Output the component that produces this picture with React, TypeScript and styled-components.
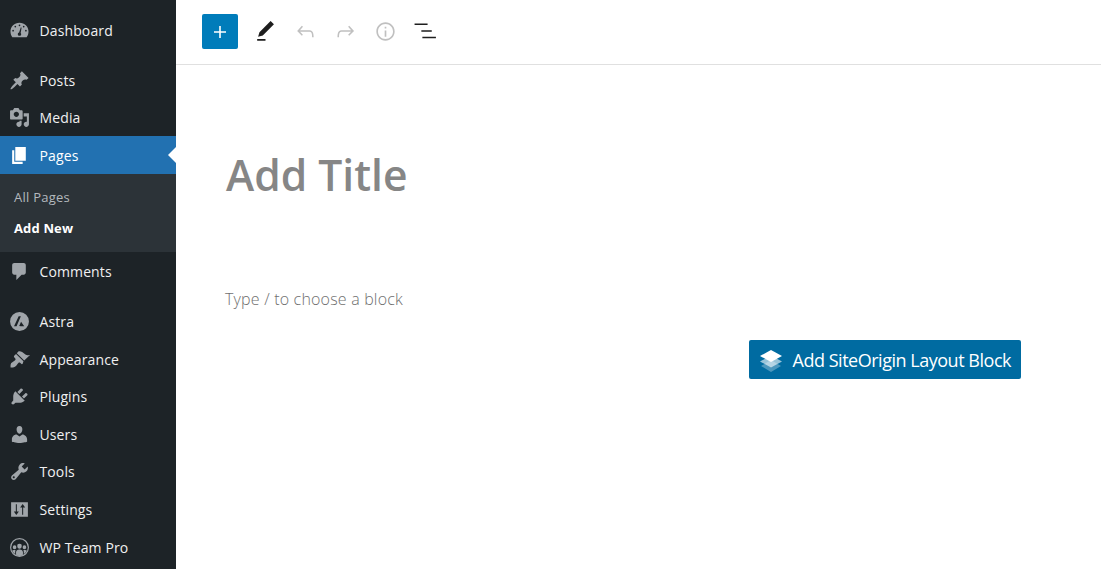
import React from 'react';
import styled, { createGlobalStyle } from 'styled-components';

const GlobalStyle = createGlobalStyle`
  html, body {
    margin: 0;
    height: 100%;
    background: #fff;
    overflow: hidden;
    font-family: "Open Sans", "Noto Sans", "Liberation Sans", sans-serif;
  }
`;

const Layout = styled.div`
  display: flex;
  width: 1101px;
  height: 569px;
  overflow: hidden;
`;

const Sidebar = styled.nav`
  flex: 0 0 176px;
  background: #1d2327;
  padding-top: 11.25px;
`;

const MenuRow = styled.div<{ $active?: boolean; $gap?: number }>`
  position: relative;
  display: flex;
  align-items: center;
  height: 37.6px;
  margin-bottom: ${(p) => p.$gap ?? 0}px;
  padding-left: 9px;
  background: ${(p) => (p.$active ? '#2271b1' : 'transparent')};
  color: ${(p) => (p.$active ? '#fff' : '#f0f0f1')};
  font-size: 14px;
  letter-spacing: 0.12px;
`;

const MenuIcon = styled.svg<{ $active?: boolean }>`
  flex: 0 0 21px;
  width: 21px;
  height: 21px;
  margin-right: 9.5px;
  fill: ${(p) => (p.$active ? '#fff' : '#a0a5aa')};
`;

const ActiveArrow = styled.span`
  position: absolute;
  right: 0;
  top: 50%;
  margin-top: -8px;
  border: 8px solid transparent;
  border-left-width: 0;
  border-right-color: #fff;
`;

const SubMenu = styled.div`
  display: flex;
  flex-direction: column;
  justify-content: center;
  gap: 11px;
  box-sizing: border-box;
  height: 78.2px;
  padding: 0 0 2px 14px;
  background: #2c3338;
`;

const SubItem = styled.div<{ $current?: boolean }>`
  font-size: 13px;
  line-height: 20px;
  letter-spacing: ${(p) => (p.$current ? '0.15px' : '0.25px')};
  font-weight: ${(p) => (p.$current ? 700 : 400)};
  color: ${(p) => (p.$current ? '#fff' : '#b4b9be')};
`;

const Main = styled.main`
  flex: 1;
  min-width: 0;
  display: flex;
  flex-direction: column;
`;

const Toolbar = styled.header`
  display: flex;
  align-items: center;
  gap: 1px;
  box-sizing: border-box;
  height: 65px;
  padding: 0 0 1px 26px;
  border-bottom: 1px solid #e0e0e0;
`;

const InserterButton = styled.button`
  display: flex;
  align-items: center;
  justify-content: center;
  width: 36px;
  height: 35px;
  margin-right: 7px;
  padding: 0;
  border: 0;
  border-radius: 2px;
  background: #007cba;
  svg {
    width: 24px;
    height: 24px;
    fill: #fff;
  }
`;

const ToolButton = styled.button<{ $muted?: boolean }>`
  display: flex;
  align-items: center;
  justify-content: center;
  width: 39px;
  height: 36px;
  padding: 0;
  border: 0;
  background: none;
  svg {
    width: 25px;
    height: 25px;
    fill: ${(p) => (p.$muted ? '#c0c0c0' : '#1e1e1e')};
  }
`;

const Canvas = styled.div`
  display: flex;
  flex-direction: column;
  padding: 0 80px 0 50px;
`;

const Title = styled.h1`
  margin: 80px 0 0;
  font-size: 42.6px;
  line-height: 58px;
  font-weight: 600;
  color: #868686;
`;

const Placeholder = styled.p`
  margin: 84px 0 0 -1px;
  font-size: 16px;
  line-height: 24px;
  font-weight: 300;
  letter-spacing: 0.19px;
  color: #6f6f6f;
`;

const LayoutButton = styled.button`
  align-self: flex-end;
  display: flex;
  align-items: center;
  gap: 10px;
  box-sizing: border-box;
  height: 39px;
  margin-top: 29px;
  padding: 0 10px;
  border: 0;
  border-radius: 2px;
  background: #006ba1;
  color: #fff;
  font: inherit;
  font-size: 18px;
  letter-spacing: -0.48px;
  svg {
    width: 24px;
    height: 24px;
  }
`;

const icons: Record<string, React.ReactNode> = {
  dashboard: (
    <path
      fillRule="evenodd"
      d="M3.200 16.500h13.600C17.900 15 18.600 13.100 18.600 11 18.600 6.300 14.800 2.600 10 2.600S1.400 6.300 1.400 11c0 2.100.7 4 1.800 5.500zM10 4.300a.8.8 0 1 1 0 1.600.8.8 0 0 1 0-1.600zM6 5.500a.8.8 0 1 1 0 1.600.8.8 0 0 1 0-1.600zm8 0a.8.8 0 1 1 0 1.600.8.8 0 0 1 0-1.600zM3.900 9.400a.8.8 0 1 1 0 1.600.8.8 0 0 1 0-1.600zm12.200 0a.8.8 0 1 1 0 1.600.8.8 0 0 1 0-1.600zM11.300 7l.7.300-.9 5c.3.300.5.700.5 1.200 0 .9-.7 1.500-1.600 1.500s-1.600-.6-1.600-1.500c0-.8.5-1.400 1.200-1.500z"
    />
  ),
  post: (
    <path d="M10.440 3.020l1.820-1.820 6.360 6.350-1.830 1.820c-1.050-.68-2.480-.57-3.410.36l-.75.75c-.92.930-1.040 2.350-.35 3.410l-1.830 1.820-2.410-2.410-2.800 2.790c-.42.420-3.380 2.710-3.800 2.290s1.860-3.390 2.280-3.810l2.790-2.790L4.100 9.360l1.830-1.820c1.050.690 2.480.570 3.400-.36l.75-.75c.930-.920 1.050-2.350.360-3.410z" />
  ),
  media: (
    <path d="M13 11V4c0-.55-.45-1-1-1h-1.670L9 1H5L3.670 3H2c-.55 0-1 .45-1 1v7c0 .55.45 1 1 1h10c.55 0 1-.45 1-1zM7 4.500c1.380 0 2.500 1.120 2.500 2.500S8.380 9.500 7 9.500 4.500 8.380 4.500 7 5.620 4.500 7 4.500zM14 6h5v10.500c0 1.380-1.120 2.500-2.500 2.500S14 17.880 14 16.500s1.120-2.500 2.500-2.500c.17 0 .34.020.5.050V9h-3V6zm-4 8.050V13h2v3.500c0 1.380-1.120 2.500-2.500 2.500S7 17.880 7 16.500 8.120 14 9.500 14c.17 0 .34.020.5.050z" />
  ),
  page: <path d="M6 15V2h10v13H6zm-1 1h8v2H3V5h2v11z" />,
  comments: (
    <path d="M5 2h9c1.100 0 2 .9 2 2v7c0 1.100-.9 2-2 2h-2l-5 5v-5H5c-1.100 0-2-.9-2-2V4c0-1.100.9-2 2-2z" />
  ),
  astra: (
    <path
      fillRule="evenodd"
      d="M10 1a9 9 0 1 1 0 18 9 9 0 0 1 0-18zM9.200 5L4.800 14.600h2.400l4.100-9.600zm2.300 5.200l-1.800 4 1.600.4h3.200z"
    />
  ),
  appearance: (
    <path d="M14.480 11.060L7.410 3.990l1.500-1.500c.5-.56 2.300-.47 3.510.32 1.210.8 1.430 1.280 2.910 2.100 1.180.64 2.450 1.260 4.670.85zm-.71.71L6.700 4.700 4.930 6.470c-.39.39-.39 1.020 0 1.410l1.060 1.060c.39.39.39 1.030 0 1.420-.6.6-1.430 1.110-2.210 1.690-.35.26-.7.53-1.010.84C1.430 13.710 1.400 15.600 1.500 17.500c.3.300 3.300.6 5.100-1.200.31-.31.58-.66.840-1.010.58-.78 1.090-1.610 1.690-2.210.39-.39 1.030-.39 1.420 0l1.060 1.060c.39.390 1.020.390 1.410 0z" />
  ),
  plugins: (
    <path d="M13.110 4.360L9.870 7.600 8 5.730l3.240-3.240c.35-.34 1.050-.2 1.560.32.52.51.66 1.210.31 1.550zm-8 1.770l.91-1.120 9.010 9.010-1.190.84c-.71.71-2.630 1.160-3.820 1.160H6.140L4.900 17.260c-.59.59-1.540.59-2.120 0-.59-.58-.59-1.530 0-2.120l1.240-1.240v-3.880c0-1.130.4-3.180 1.090-3.890zm7.260 3.970l3.240-3.240c.34-.35 1.040-.21 1.550.31.52.51.66 1.210.31 1.550l-3.240 3.250z" />
  ),
  users: (
    <path d="M10 9.250c-2.270 0-2.730-3.440-2.730-3.440C7 4.020 7.820 2 9.970 2c2.160 0 2.980 2.020 2.710 3.810 0 0-.41 3.440-2.680 3.440zm0 2.570L12.720 10c2.390 0 4.520 2.330 4.520 4.530v2.490s-3.650 1.130-7.240 1.130c-3.650 0-7.240-1.130-7.240-1.130v-2.490c0-2.250 1.940-4.480 4.470-4.480z" />
  ),
  tools: (
    <path d="M16.680 9.770c-1.340 1.340-3.300 1.670-4.950.99l-5.410 6.520c-.99.99-2.590.99-3.570 0-.99-.98-.99-2.580 0-3.570l6.520-5.420c-.68-1.650-.35-3.610.99-4.950 1.280-1.280 3.120-1.620 4.720-1.060l-2.890 2.890 2.820 2.820 2.860-2.870c.53 1.580.18 3.400-1.090 4.650zM3.810 16.210c.4.390 1.040.39 1.430 0 .4-.4.4-1.040 0-1.430-.39-.4-1.030-.4-1.430 0-.39.39-.39 1.030 0 1.430z" />
  ),
  settings: (
    <path
      fillRule="evenodd"
      d="M2 3h16v14H2zM6.500 5v7H4.600L7 15.200 9.400 12H7.500V5zM13 4.800L10.600 8h1.900v7h1V8h1.900z"
    />
  ),
  team: (
    <path
      fillRule="evenodd"
      d="M10 1a9 9 0 1 1 0 18 9 9 0 0 1 0-18zm0 1.100a7.900 7.900 0 1 0 0 15.800 7.900 7.900 0 0 0 0-15.800zM10 6.400a2.100 2.100 0 0 1 2.100 2.300c0 1.300-.9 2.400-2.100 2.400s-2.100-1.100-2.100-2.400A2.100 2.100 0 0 1 10 6.400zM5.300 7.900a1.700 1.700 0 0 1 1.700 1.800c0 1-.7 1.900-1.700 1.900s-1.700-.9-1.700-1.900a1.700 1.700 0 0 1 1.700-1.800zm9.400 0a1.700 1.700 0 0 1 1.700 1.800c0 1-.7 1.900-1.700 1.900s-1.700-.9-1.700-1.900a1.700 1.700 0 0 1 1.700-1.800zM10 11.800c2 0 3.300 1.100 3.300 2.700V17a8 8 0 0 1-6.600 0v-2.500c0-1.600 1.300-2.700 3.300-2.700zm-4.700.5c.4 0 .7.100 1 .2-.3.500-.4 1.100-.4 1.700v2.100a8 8 0 0 1-3-3.100c.4-.6 1.300-.9 2.400-.9zm9.400 0c1.100 0 2 .3 2.400.9a8 8 0 0 1-3 3.100v-2.100c0-.6-.1-1.200-.4-1.700.3-.1.600-.2 1-.2z"
    />
  ),
};

const MenuItem = ({
  icon,
  label,
  active,
  gap,
}: {
  icon: string;
  label: string;
  active?: boolean;
  gap?: number;
}) => (
  <MenuRow $active={active} $gap={gap}>
    <MenuIcon viewBox="0 0 20 20" $active={active}>
      {icons[icon]}
    </MenuIcon>
    {label}
    {active && <ActiveArrow />}
  </MenuRow>
);

const App = () => {
  return (
    <Layout>
      <GlobalStyle />
      <Sidebar>
        <MenuItem icon="dashboard" label="Dashboard" gap={12.4} />
        <MenuItem icon="post" label="Posts" />
        <MenuItem icon="media" label="Media" />
        <MenuItem icon="page" label="Pages" active />
        <SubMenu>
          <SubItem>All Pages</SubItem>
          <SubItem $current>Add New</SubItem>
        </SubMenu>
        <MenuItem icon="comments" label="Comments" gap={13} />
        <MenuItem icon="astra" label="Astra" />
        <MenuItem icon="appearance" label="Appearance" />
        <MenuItem icon="plugins" label="Plugins" />
        <MenuItem icon="users" label="Users" />
        <MenuItem icon="tools" label="Tools" />
        <MenuItem icon="settings" label="Settings" />
        <MenuItem icon="team" label="WP Team Pro" />
      </Sidebar>
      <Main>
        <Toolbar>
          <InserterButton aria-label="Add block">
            <svg viewBox="0 0 24 24">
              <path d="M18 11.200h-5.200V6h-1.600v5.200H6v1.600h5.200V18h1.600v-5.200H18z" />
            </svg>
          </InserterButton>
          <ToolButton aria-label="Tools">
            <svg viewBox="0 0 24 24">
              <path d="M20.100 5.100L16.900 2 6.200 12.700l-1.300 4.400 4.500-1.300L20.100 5.100zM4 20.800h8v-1.500H4v1.500z" />
            </svg>
          </ToolButton>
          <ToolButton $muted aria-label="Undo">
            <svg viewBox="0 0 24 24">
              <path d="M18.300 11.700c-.6-.6-1.400-.9-2.300-.9H6.700l2.900-3.300-1.100-1-4.500 5L8.500 16l1-1-2.700-2.700H16c.5 0 .9.200 1.300.5 1 1 1 3.400 1 4.500v.3h1.500v-.2c0-1.500 0-4.300-1.500-5.700z" />
            </svg>
          </ToolButton>
          <ToolButton $muted aria-label="Redo">
            <svg viewBox="0 0 24 24">
              <path d="M15.600 6.500l-1.100 1 2.900 3.300H8c-.9 0-1.700.3-2.300.9-1.400 1.500-1.400 4.200-1.400 5.600v.2h1.500v-.3c0-1.100 0-3.500 1-4.500.3-.3.700-.5 1.300-.5h9.200L14.500 15l1.100 1.100 4.600-4.600-4.600-5z" />
            </svg>
          </ToolButton>
          <ToolButton $muted aria-label="Details">
            <svg viewBox="0 0 24 24">
              <path d="M12 3.200c-4.800 0-8.800 3.900-8.800 8.800 0 4.800 3.900 8.800 8.800 8.800 4.800 0 8.800-3.900 8.800-8.800 0-4.800-4-8.800-8.800-8.800zm0 16c-4 0-7.200-3.300-7.200-7.200C4.800 8 8 4.800 12 4.800s7.200 3.300 7.200 7.200c0 4-3.200 7.200-7.200 7.200zM11.200 17h1.600v-6h-1.600v6zm0-8h1.600V7.400h-1.600V9z" />
            </svg>
          </ToolButton>
          <ToolButton aria-label="List view">
            <svg viewBox="0 0 24 24">
              <path d="M1.500 4.300H14v1.500H1.500zM8 10.750h10v1.500H8zM9 17h13v1.500H9z" />
            </svg>
          </ToolButton>
        </Toolbar>
        <Canvas>
          <Title>Add Title</Title>
          <Placeholder>Type / to choose a block</Placeholder>
          <LayoutButton>
            <svg viewBox="0 0 24 24">
              <path fill="#fff" fillOpacity=".3" d="M12 12l-10 6 10 6 10-6z" />
              <path fill="#fff" fillOpacity=".6" d="M12 7.500l-11 6 11 6 11-6z" />
              <path fill="#fff" d="M12 2L1 8l11 6 11-6z" />
            </svg>
            Add SiteOrigin Layout Block
          </LayoutButton>
        </Canvas>
      </Main>
    </Layout>
  );
};

export default App;
